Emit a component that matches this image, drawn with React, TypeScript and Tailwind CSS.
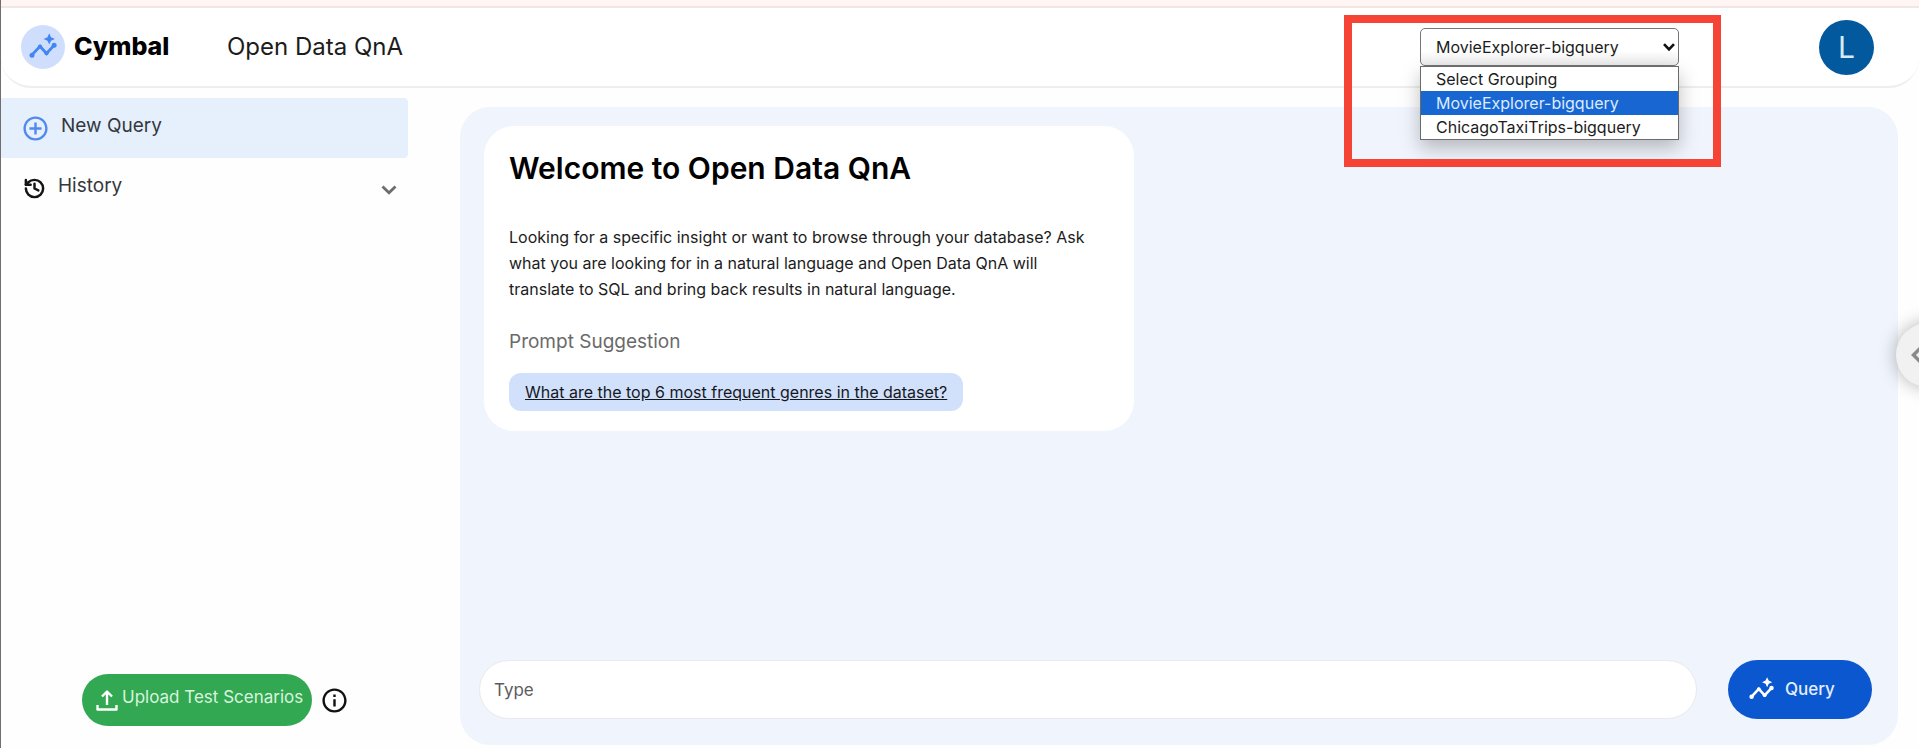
import { useState } from "react";
import { History } from "lucide-react";
import { MdInfoOutline, MdAddCircleOutline } from "react-icons/md";

const groupings = ["Select Grouping", "MovieExplorer-bigquery", "ChicagoTaxiTrips-bigquery"];

function InsightsIcon({ className }: { className: string }) {
  return (
    <svg viewBox="0 0 24 24" className={className} fill="currentColor" aria-hidden="true">
      <path d="M3 18.500 9.600 11.500 14.800 17.200 21 10.500" fill="none" stroke="currentColor" strokeWidth="2.300" />
      <circle cx="3.200" cy="18.500" r="2" />
      <circle cx="9.600" cy="11.600" r="1.700" />
      <circle cx="14.800" cy="17" r="1.700" />
      <circle cx="20.900" cy="10.600" r="2" />
      <path d="M17 1 18.400 4.100 21.500 5.500 18.400 6.900 17 10 15.600 6.900 12.500 5.500 15.600 4.100Z" />
    </svg>
  );
}

function GroupingSelect() {
  const [value, setValue] = useState("MovieExplorer-bigquery");
  return (
    <div className="relative w-[259px]">
      <select
        aria-label="Grouping"
        value={value}
        onChange={(e) => setValue(e.target.value)}
        className="block h-[38px] w-full appearance-none rounded-[5px] border border-[#767676] bg-linear-to-b from-white from-60% to-[#ececec] pl-[15px] pr-8 text-base text-[#1c1c1c]"
      >
        {groupings.map((g) => (
          <option key={g}>{g}</option>
        ))}
      </select>
      <svg viewBox="0 0 12 8" className="pointer-events-none absolute right-1 top-[15px] h-2 w-3" fill="none" stroke="#111" strokeWidth="2.6">
        <path d="M1 1.2 6 6.4 11 1.2" />
      </svg>
      <ul className="absolute left-0 top-full z-10 w-full border border-[#6b6b6b] bg-white text-base leading-6 text-[#1c1c1c] shadow-[0_8px_18px_rgba(0,0,0,0.25)]">
        {groupings.map((g) => (
          <li key={g} className={g === value ? "bg-[#1866d2] pl-[15px] text-[#dcebff]" : "pl-[15px]"}>
            {g}
          </li>
        ))}
      </ul>
      <div className="pointer-events-none absolute -bottom-[101px] -left-[76px] -right-[42px] -top-[13px] z-20 border-8 border-[#f54336]" />
    </div>
  );
}

function Header() {
  return (
    <header className="flex h-20 items-center rounded-b-[30px] border-b-2 border-[#efeeee] bg-white pl-5 pr-[45px]">
      <span className="flex size-11 items-center justify-center rounded-full bg-[#cfdefc]">
        <InsightsIcon className="size-[30px] text-[#4285f4]" />
      </span>
      <span className="ml-[9px] w-[97px] text-[25px] font-extrabold text-black">Cymbal</span>
      <h1 className="ml-[56px] text-2xl text-[#1c1c1c]">Open Data QnA</h1>
      <div className="ml-auto">
        <GroupingSelect />
      </div>
      <button aria-label="Account" className="ml-[140px] size-[55px] rounded-full bg-[#03599d] text-[30px] leading-none text-[#dbeaf7]">
        L
      </button>
    </header>
  );
}

function Sidebar() {
  return (
    <nav className="flex w-[407px] shrink-0 flex-col pt-[10px]">
      <button className="flex h-[60px] items-center gap-[11px] rounded-r bg-[#e6f0fd] pl-5 text-[19px] text-[#34383d]">
        <MdAddCircleOutline className="size-[29px] text-[#5289f0]" />
        <span className="pb-1">New Query</span>
      </button>
      <button className="flex h-[60px] items-center gap-3 pl-[22px] pr-[11px] text-[19px] text-[#34383d]">
        <History className="size-[23px] text-[#151515]" strokeWidth={2.6} />
        <span className="pb-1">History</span>
        <svg viewBox="0 0 16 10" className="ml-auto mt-1 h-[10px] w-4" fill="none" stroke="#6d6d6d" strokeWidth="2.8" aria-hidden="true">
          <path d="M1.500 1.500 8 7.800 14.500 1.500" />
        </svg>
      </button>
      <div className="mb-[22px] ml-[81px] mt-auto flex items-center gap-2">
        <button className="flex h-[52px] w-[230px] items-center gap-1 rounded-full bg-[#33a852] pl-[14px] text-[17px] text-[#d8f5df]">
          <svg viewBox="0 0 22 22" className="size-[22px] shrink-0" fill="none" stroke="#fff" strokeWidth="2.4" strokeLinejoin="round" aria-hidden="true">
            <path d="M1.500 16V20.500H20.500V16M11 16V3M6 7.500 11 2.500 16 7.500" />
          </svg>
          <span className="whitespace-nowrap pb-1">Upload Test Scenarios</span>
        </button>
        <button aria-label="Information">
          <MdInfoOutline className="size-[29px] text-[#111]" />
        </button>
      </div>
    </nav>
  );
}

function WelcomeCard() {
  return (
    <section className="h-[305px] max-w-[650px] rounded-[30px] bg-white pl-[25px] pr-10 pt-5 text-black">
      <h2 className="text-[30px] font-semibold leading-[44px]">Welcome to Open Data QnA</h2>
      <p className="mt-[34px] text-base leading-[26px] text-[#1c1c1c]">
        Looking for a specific insight or want to browse through your database? Ask what you are looking for in a natural
        language and Open Data QnA will translate to SQL and bring back results in natural language.
      </p>
      <h3 className="mt-[26px] text-[19px] leading-7 text-[#6a6a6a]">Prompt Suggestion</h3>
      <button className="mt-[17px] h-[38px] rounded-xl bg-[#d2e1fb] px-4 text-base text-[#15181e] underline">
        What are the top 6 most frequent genres in the dataset?
      </button>
    </section>
  );
}

export default function App() {
  return (
    <div className="relative flex min-h-screen flex-col overflow-hidden border-l border-[#6f6f6f] bg-[#fefefe] font-['Inter',sans-serif]">
      <div className="h-2 border-b-2 border-[#f1e6e4] bg-[#fff6f3]" />
      <Header />
      <div className="flex grow pr-[21px]">
        <Sidebar />
        <main className="mb-[3px] ml-[52px] mt-[19px] flex grow flex-col rounded-[30px] bg-[#f0f4fc] pb-[26px] pl-[19px] pr-[26px] pt-[19px]">
          <div className="grow pl-[5px]">
            <WelcomeCard />
          </div>
          <form className="flex gap-[31px]" onSubmit={(e) => e.preventDefault()}>
            <input
              aria-label="Type"
              placeholder="Type"
              className="h-[59px] min-w-0 grow rounded-full border border-[#e9e9ec] bg-white px-[14px] text-[17px] text-[#333] placeholder:text-[#5c5c5c]"
            />
            <button className="flex h-[59px] w-[144px] items-center gap-[10px] rounded-full bg-[#0b57d0] pl-5 text-[17px] font-medium text-[#e3edff]">
              <InsightsIcon className="size-[27px] text-white" />
              Query
            </button>
          </form>
        </main>
      </div>
      <button
        aria-label="Open side panel"
        className="absolute -right-[41px] top-[323px] size-16 rounded-full bg-[#f1f1f1] pl-[13px] shadow-[0_0_18px_rgba(0,0,0,0.3)]"
      >
        <svg viewBox="0 0 20 20" className="size-5" fill="none" stroke="#8a8a8a" strokeWidth="3.500">
          <path d="M12 2.500 4.500 10 12 17.500" />
        </svg>
      </button>
    </div>
  );
}
